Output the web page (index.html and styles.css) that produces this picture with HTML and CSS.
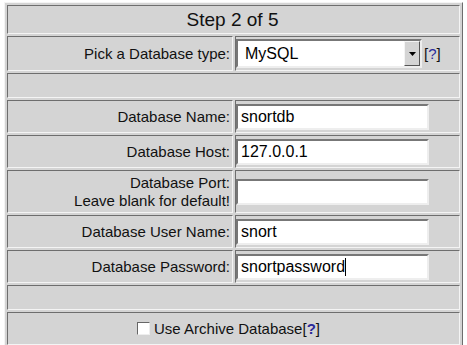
FILE: index.html
```html
<!DOCTYPE html>
<html>
<head>
<meta charset="utf-8">
<link rel="stylesheet" href="styles.css">
</head>
<body>
<div class="wrap">
<table class="form">
  <colgroup><col class="c1"><col class="c2"></colgroup>
  <tr class="r-step"><td colspan="2" class="step">Step 2 of 5</td></tr>
  <tr class="r-type">
    <td class="lbl">Pick a Database type:</td>
    <td class="fld">
      <span class="selbox">
        <select class="sel"><option>MySQL</option></select>
        <span class="arrow"><svg width="7" height="4" viewBox="0 0 7 4"><path d="M0 0H7L3.5 4Z" fill="#000"/></svg></span>
      </span><a class="help" href="#">[<b>?</b>]</a>
    </td>
  </tr>
  <tr class="r-empty"><td colspan="2"></td></tr>
  <tr class="r-in"><td class="lbl">Database Name:</td><td class="fld"><input class="txt" type="text" value="snortdb"></td></tr>
  <tr class="r-in"><td class="lbl">Database Host:</td><td class="fld"><input class="txt" type="text" value="127.0.0.1"></td></tr>
  <tr class="r-port"><td class="lbl two">Database Port:<br>Leave blank for default!</td><td class="fld"><input class="txt" type="text" value=""></td></tr>
  <tr class="r-in"><td class="lbl">Database User Name:</td><td class="fld"><input class="txt" type="text" value="snort"></td></tr>
  <tr class="r-in"><td class="lbl">Database Password:</td><td class="fld"><span class="caretbox"><input class="txt" type="text" value="snortpassword"><span class="caret"></span></span></td></tr>
  <tr class="r-empty"><td colspan="2"></td></tr>
  <tr class="r-chk"><td colspan="2" class="chk"><span class="box"></span>Use Archive Database<a class="help" href="#">[<b>?</b>]</a></td></tr>
</table>
</div>
</body>
</html>
```
FILE: styles.css
```css
html, body {
  margin: 0;
  padding: 0;
  background: #fff;
}
body {
  font-family: "Liberation Sans", Arial, sans-serif;
  color: #000;
}
.wrap {
  padding: 2px 0 0 4px;
}
.form {
  width: 459px;
  table-layout: fixed;
  border-collapse: separate;
  border-spacing: 2px;
  border: 1px solid;
  border-color: #f4f4f4 #6e6e6e #6e6e6e #f4f4f4;
  background: #d4d4d4;
}
.c1 { width: 226px; }
.c2 { width: 225px; }
.form td {
  border: 1px solid;
  border-color: #6e6e6e #f4f4f4 #f4f4f4 #6e6e6e;
  padding: 0 2px 0 0;
  font-size: 15px;
  vertical-align: middle;
  color: #111;
}
.r-step td { height: 27px; }
.r-type td { height: 33px; }
.r-empty td { height: 23px; }
.r-in td { height: 31px; }
.r-port td { height: 41px; }
.r-chk td { height: 31px; }
.step {
  text-align: center;
  font-size: 19px !important;
}
.lbl {
  text-align: right;
}
.lbl.two {
  line-height: 18px;
}
.fld {
  padding: 0 !important;
  white-space: nowrap;
}
.txt {
  box-sizing: border-box;
  width: 193px;
  height: 26px;
  margin: 0;
  padding: 0 3px;
  border: 2px solid;
  border-color: #777 #eee #eee #777;
  background: #fff;
  font-family: "Liberation Sans", Arial, sans-serif;
  font-size: 16px;
  color: #000;
  vertical-align: middle;
  outline: none;
}
.selbox {
  position: relative;
  display: inline-block;
  vertical-align: middle;
}
.sel {
  box-sizing: border-box;
  appearance: none;
  -webkit-appearance: none;
  width: 186px;
  height: 29px;
  margin: 0;
  padding: 0 0 0 7px;
  border: 2px solid;
  border-color: #777 #eee #eee #777;
  border-radius: 0;
  background: #fff;
  font-family: "Liberation Sans", Arial, sans-serif;
  font-size: 16px;
  color: #000;
  display: block;
}
.arrow {
  position: absolute;
  right: 2px;
  top: 2px;
  bottom: 2px;
  width: 16px;
  box-sizing: border-box;
  background: #d4d4d4;
  border: 1px solid;
  border-color: #f4f4f4 #555 #555 #f4f4f4;
  display: flex;
  align-items: center;
  justify-content: center;
}
.help {
  color: #111;
  text-decoration: none;
  font-size: 15px;
  margin-left: 2px;
  vertical-align: middle;
}
.help b {
  color: #2a2a9a;
  font-weight: normal;
}
.chk .help { margin-left: 0; margin-right: 8px; vertical-align: baseline; }
.chk .help b { font-weight: bold; }
.caretbox {
  position: relative;
  display: inline-block;
  vertical-align: middle;
}
.caret {
  position: absolute;
  left: 109px;
  top: 4px;
  width: 1px;
  height: 18px;
  background: #000;
}
.chk {
  text-align: center;
}
.box {
  display: inline-block;
  box-sizing: border-box;
  width: 13px;
  height: 13px;
  border: 1px solid;
  border-color: #666 #eee #eee #666;
  background: #fff;
  margin-right: 4px;
  vertical-align: -1px;
}
```
